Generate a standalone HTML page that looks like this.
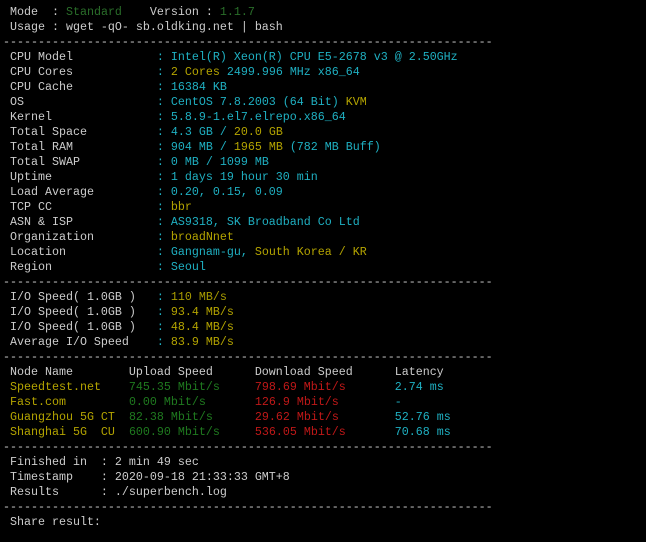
<!DOCTYPE html>
<html><head><meta charset="utf-8"><style>
html,body{margin:0;padding:0;background:#000;}
body{width:646px;height:542px;overflow:hidden;}
pre{margin:0;padding:5px 0 0 3px;font-family:"Liberation Mono",monospace;font-size:11.67px;line-height:15px;color:#cccccc;white-space:pre;}
.c{color:#1fb0c2}.y{color:#b4a400}.g{color:#1f7a1f}.r{color:#c01818}.dg{color:#2a6e2a}.o{color:#a89c00}
</style></head><body><pre> Mode  : <span class="dg">Standard</span>    Version : <span class="dg">1.1.7</span>
 Usage : wget -qO- sb.oldking.net | bash
----------------------------------------------------------------------
 CPU Model            <span class="c">: Intel(R) Xeon(R) CPU E5-2678 v3 @ 2.50GHz</span>
 CPU Cores            <span class="c">: </span><span class="y">2 Cores </span><span class="c">2499.996 MHz x86_64</span>
 CPU Cache            <span class="c">: 16384 KB</span>
 OS                   <span class="c">: CentOS 7.8.2003 (64 Bit) </span><span class="y">KVM</span>
 Kernel               <span class="c">: 5.8.9-1.el7.elrepo.x86_64</span>
 Total Space          <span class="c">: 4.3 GB / </span><span class="y">20.0 GB</span>
 Total RAM            <span class="c">: 904 MB / </span><span class="y">1965 MB </span><span class="c">(782 MB Buff)</span>
 Total SWAP           <span class="c">: 0 MB / 1099 MB</span>
 Uptime               <span class="c">: 1 days 19 hour 30 min</span>
 Load Average         <span class="c">: 0.20, 0.15, 0.09</span>
 TCP CC               <span class="c">: </span><span class="y">bbr</span>
 ASN &amp; ISP            <span class="c">: AS9318, SK Broadband Co Ltd</span>
 Organization         <span class="c">: </span><span class="y">broadNnet</span>
 Location             <span class="c">: Gangnam-gu, </span><span class="y">South Korea / KR</span>
 Region               <span class="c">: Seoul</span>
----------------------------------------------------------------------
 I/O Speed( 1.0GB )   <span class="c">: </span><span class="o">110 MB/s</span>
 I/O Speed( 1.0GB )   <span class="c">: </span><span class="y">93.4 MB/s</span>
 I/O Speed( 1.0GB )   <span class="c">: </span><span class="y">48.4 MB/s</span>
 Average I/O Speed    <span class="c">: </span><span class="y">83.9 MB/s</span>
----------------------------------------------------------------------
 Node Name        Upload Speed      Download Speed      Latency
 <span class="y">Speedtest.net</span>    <span class="g">745.35 Mbit/s</span>     <span class="r">798.69 Mbit/s</span>       <span class="c">2.74 ms</span>
 <span class="y">Fast.com</span>         <span class="g">0.00 Mbit/s</span>       <span class="r">126.9 Mbit/s</span>        <span class="c">-</span>
 <span class="y">Guangzhou 5G CT</span>  <span class="g">82.38 Mbit/s</span>      <span class="r">29.62 Mbit/s</span>        <span class="c">52.76 ms</span>
 <span class="y">Shanghai 5G  CU</span>  <span class="g">600.90 Mbit/s</span>     <span class="r">536.05 Mbit/s</span>       <span class="c">70.68 ms</span>
----------------------------------------------------------------------
 Finished in  : 2 min 49 sec
 Timestamp    : 2020-09-18 21:33:33 GMT+8
 Results      : ./superbench.log
----------------------------------------------------------------------
 Share result:
</pre></body></html>
